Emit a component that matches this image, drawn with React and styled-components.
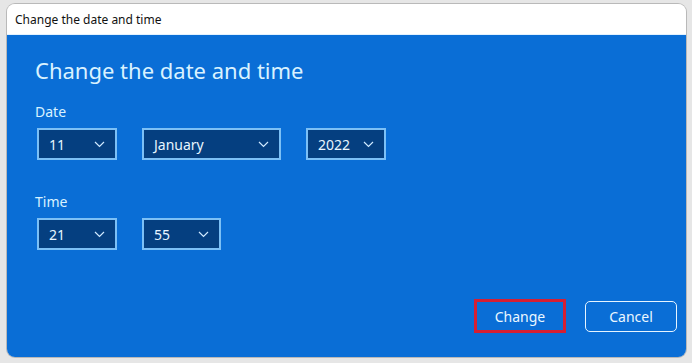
import React from 'react';
import styled, { createGlobalStyle } from 'styled-components';

const colors = {
  page: '#e6e6e6',
  blue: '#0a6ed6',
  field: '#053f80',
  fieldBorder: '#7cc0f6',
  text: '#d9f2ff',
  red: '#d51f33',
};

const GlobalStyle = createGlobalStyle`
  html, body {
    margin: 0;
    padding: 0;
    background: ${colors.page};
    font-family: "Segoe UI", "Noto Sans", "Open Sans", sans-serif;
  }
`;

const Page = styled.div`
  width: 692px;
  height: 363px;
  padding: 4px 6px 6px 7px;
  box-sizing: border-box;
`;

const Window = styled.div`
  height: 100%;
  display: flex;
  flex-direction: column;
  border-radius: 8px;
  overflow: hidden;
  box-shadow: 0 0 0 1px #b9b9b9;
`;

const TitleBar = styled.div`
  height: 30px;
  background: #fff;
  display: flex;
  align-items: center;
  padding-left: 8px;
  font-size: 12px;
  color: #111;
  border-bottom: 1px solid #e2f2ff;
`;

const Body = styled.div`
  flex: 1;
  background: ${colors.blue};
  padding: 20px 28px 24px 28px;
  display: flex;
  flex-direction: column;
  color: ${colors.text};
`;

const Heading = styled.h1`
  margin: 0 0 18px;
  font-size: 22px;
  font-weight: 400;
  line-height: 30px;
`;

const Label = styled.div`
  font-size: 14px;
  line-height: 18px;
  margin-bottom: 7px;
`;

const Row = styled.div`
  display: flex;
  gap: 25px;
  padding-left: 2px;
  margin-bottom: ${p => p.$mb || 0}px;
`;

const Field = styled.div`
  width: ${p => p.$w}px;
  height: 32px;
  box-sizing: border-box;
  border: 2px solid ${colors.fieldBorder};
  background: ${colors.field};
  display: flex;
  align-items: center;
  justify-content: space-between;
  padding: 0 10px 0 10px;
  font-size: 14px;
  color: #e8f6ff;
`;

const Chevron = () => (
  <svg width="11" height="7" viewBox="0 0 11 7">
    <path d="M1 1l4.5 4.5L10 1" fill="none" stroke="#cfe9ff" strokeWidth="1.2" />
  </svg>
);

const Footer = styled.div`
  margin-top: auto;
  display: flex;
  justify-content: flex-end;
  align-items: center;
  gap: 19px;
  margin-right: -19px;
`;

const Button = styled.button`
  width: 92px;
  height: ${p => (p.$highlight ? 34 : 31)}px;
  box-sizing: border-box;
  background: ${colors.blue};
  color: #eaf7ff;
  font-family: inherit;
  font-size: 14px;
  border-radius: ${p => (p.$highlight ? 0 : 5)}px;
  border: ${p => (p.$highlight ? `3px solid ${colors.red}` : '1.5px solid #e6f4ff')};
  padding: 0;
`;

const Dropdown = ({ value, w }) => (
  <Field $w={w}>
    <span>{value}</span>
    <Chevron />
  </Field>
);

export default function App() {
  return (
    <>
      <GlobalStyle />
      <Page>
        <Window>
          <TitleBar>Change the date and time</TitleBar>
          <Body>
            <Heading>Change the date and time</Heading>
            <Label>Date</Label>
            <Row $mb={33}>
              <Dropdown value="11" w={80} />
              <Dropdown value="January" w={139} />
              <Dropdown value="2022" w={80} />
            </Row>
            <Label>Time</Label>
            <Row>
              <Dropdown value="21" w={80} />
              <Dropdown value="55" w={79} />
            </Row>
            <Footer>
              <Button $highlight>Change</Button>
              <Button>Cancel</Button>
            </Footer>
          </Body>
        </Window>
      </Page>
    </>
  );
}
